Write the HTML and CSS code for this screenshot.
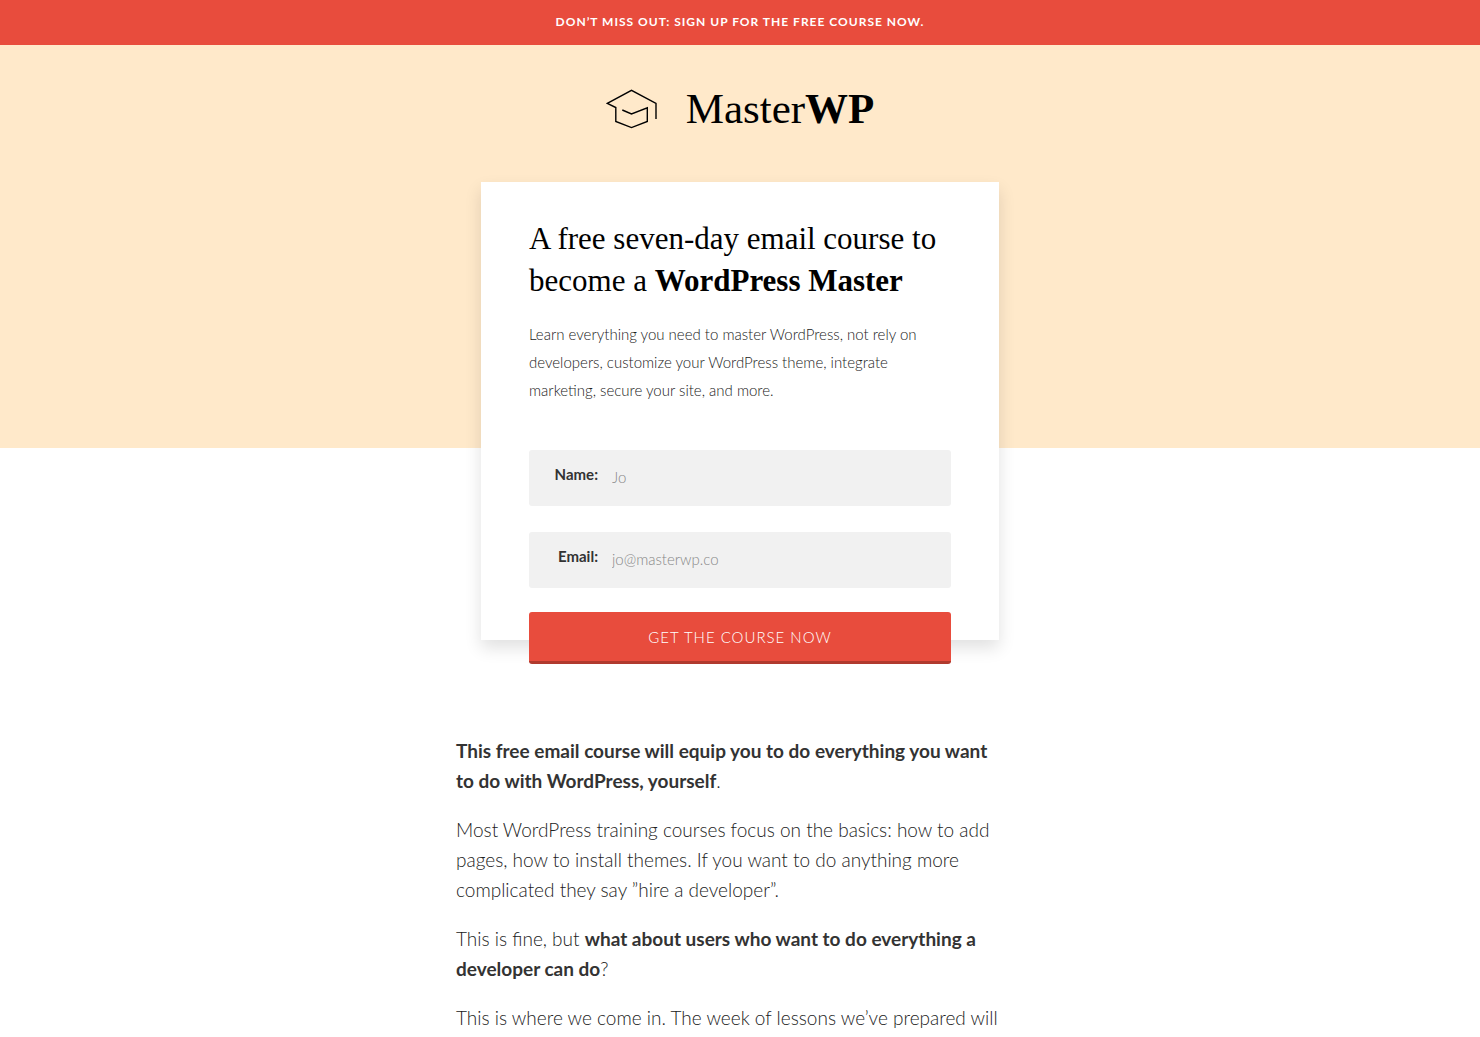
FILE: index.html
```html
<!DOCTYPE html>
<html lang="en">
<head>
    <meta charset="UTF-8">
    <meta name="viewport" content="width=device-width, initial-scale=1.0">
    <title>MasterWP</title>
    <link rel="stylesheet" href="styles.css">
</head>
<body>
    <div class="promo">Don’t miss out: Sign up for the free course now.</div>

    <header class="hero">
        <div class="logo">
            <svg class="logo-icon" viewBox="0 0 52 40" fill="none" stroke="#000" stroke-width="1.4" aria-hidden="true">
                <path d="M50 30V14.3L25.5 1.3L1.3 14.3L9.8 18.5V32.5L25.5 38.6L41.3 32.5V18.8L25.5 25L16.3 21"/>
            </svg>
            <span class="logo-text">Master<strong>WP</strong></span>
        </div>

        <div class="card">
            <h1>A free seven-day email course to become a <strong>WordPress Master</strong></h1>
            <p class="intro">Learn everything you need to master WordPress, not rely on developers, customize your WordPress theme, integrate marketing, secure your site, and more.</p>
            <form class="signup">
                <div class="field">
                    <label for="name">Name:</label>
                    <input type="text" id="name" placeholder="Jo">
                </div>
                <div class="field">
                    <label for="email">Email:</label>
                    <input type="email" id="email" placeholder="jo@masterwp.co">
                </div>
                <button type="submit">Get the course now</button>
            </form>
        </div>
    </header>

    <main class="content">
        <p><strong>This free email course will equip you to do everything you want to do with WordPress, yourself</strong>.</p>
        <p>Most WordPress training courses focus on the basics: how to add pages, how to install themes. If you want to do anything more complicated they say ”hire a developer”.</p>
        <p>This is fine, but <strong>what about users who want to do everything a developer can do</strong>?</p>
        <p>This is where we come in. The week of lessons we’ve prepared will</p>
    </main>
</body>
</html>
```
FILE: styles.css
```css
* {
    box-sizing: border-box;
}

body {
    margin: 0;
    font-family: Lato, sans-serif;
    font-weight: 300;
    color: #333;
    background: #fff;
}

/* Top bar */
.promo {
    padding: 12px 20px 13px;
    background: #e84c3d;
    color: #fff;
    font-size: 12px;
    font-weight: 700;
    line-height: 20px;
    letter-spacing: 1px;
    text-align: center;
    text-transform: uppercase;
}

/* Header */
.hero {
    display: flow-root;
    padding-top: 40px;
    background: #ffe9ca;
    margin-bottom: 288px;
}

.logo {
    display: flex;
    justify-content: center;
    align-items: center;
    gap: 28px;
    margin-bottom: 49px;
    color: #000;
    font-family: "Liberation Serif", serif;
    font-size: 43px;
    font-weight: 400;
    line-height: 48px;
}

.logo-icon {
    width: 52px;
    height: 40px;
}

/* Signup card, hangs over the bottom of the header */
.card {
    width: 35%;
    min-width: 518px;
    margin: 0 auto -192px;
    padding: 36px 48px 0;
    background: #fff;
    box-shadow: 0 8px 16px rgba(0, 0, 0, 0.12);
}

h1 {
    margin: 0 0 18px;
    color: #000;
    font-family: "Liberation Serif", serif;
    font-size: 31px;
    font-weight: 400;
    line-height: 42px;
}

.intro {
    margin: 0 0 46px;
    color: #222;
    font-size: 15px;
    line-height: 28px;
}

.field {
    display: flex;
    align-items: flex-start;
    height: 56px;
    margin-bottom: 26px;
    border-radius: 3px;
    background: #f1f1f1;
}

.field label {
    width: 69px;
    padding-top: 10px;
    font-size: 15px;
    font-weight: 700;
    line-height: 28px;
    text-align: right;
}

.field input {
    flex: 1;
    min-width: 0;
    height: 54px;
    padding: 0 14px;
    border: 0;
    background: none;
    font: inherit;
    font-size: 15px;
    color: #333;
}

.field input::placeholder {
    color: #888;
}

.signup {
    display: flex;
    flex-direction: column;
}

.signup button {
    height: 52px;
    margin: -2px 0 -24px;
    border: 0;
    border-bottom: 3px solid #b03a2e;
    border-radius: 3px;
    background: #e84c3d;
    color: #fff;
    font: inherit;
    font-size: 15px;
    letter-spacing: 1px;
    text-transform: uppercase;
    cursor: pointer;
}

/* Copy */
.content {
    width: 568px;
    max-width: 100%;
    margin: 0 auto;
    padding-right: 18px;
    color: #222;
    font-size: 19px;
    line-height: 30px;
}

.content p {
    margin: 0 0 19px;
}

strong {
    font-weight: 700;
}

.content strong {
    color: #333;
}
```
